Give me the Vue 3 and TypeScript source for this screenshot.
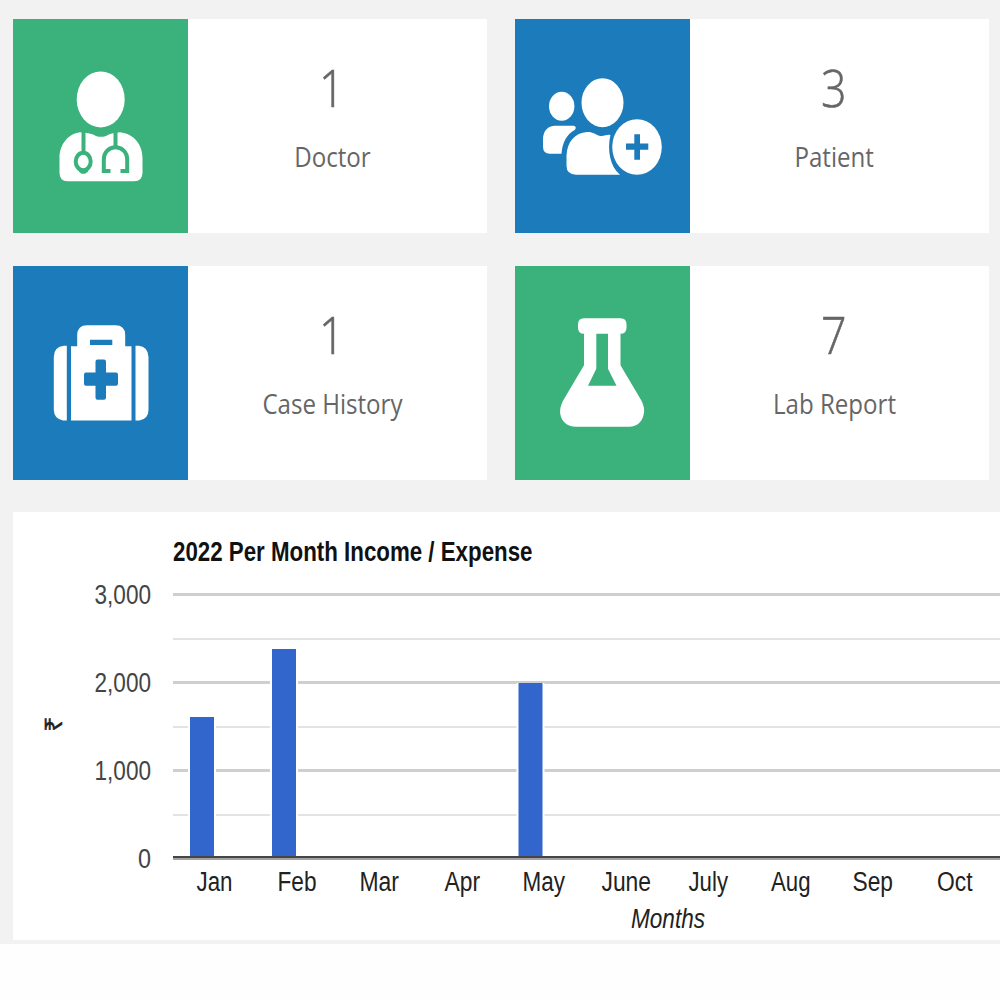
<script setup lang="ts">
interface StatCard {
  icon: 'doctor' | 'patient' | 'case' | 'lab'
  tone: 'green' | 'blue'
  viewBox: string
  value: number
  label: string
}

interface AxisLabel {
  text: string
  x: number
  width: number
}

interface Bar {
  month: string
  x: number
  y: number
}

const cards: StatCard[] = [
  { icon: 'doctor', tone: 'green', viewBox: '13 19.3 175 214', value: 1, label: 'Doctor' },
  { icon: 'patient', tone: 'blue', viewBox: '515 19.3 175 214', value: 3, label: 'Patient' },
  { icon: 'case', tone: 'blue', viewBox: '13 266.3 175 214', value: 1, label: 'Case History' },
  { icon: 'lab', tone: 'green', viewBox: '515 266.3 175 214', value: 7, label: 'Lab Report' },
]

const months: AxisLabel[] = [
  { text: 'Jan', x: 196.5, width: 36 },
  { text: 'Feb', x: 277.5, width: 39 },
  { text: 'Mar', x: 359.5, width: 39.5 },
  { text: 'Apr', x: 444.5, width: 35.5 },
  { text: 'May', x: 522.5, width: 42.5 },
  { text: 'June', x: 601.5, width: 49.5 },
  { text: 'July', x: 688.5, width: 39.5 },
  { text: 'Aug', x: 771, width: 39.5 },
  { text: 'Sep', x: 852.5, width: 40.5 },
  { text: 'Oct', x: 937, width: 35.5 },
]

const ticks = [
  { text: '3,000', y: 604, x: 94.5, width: 56.5 },
  { text: '2,000', y: 691.5, x: 94.5, width: 56.5 },
  { text: '1,000', y: 779.5, x: 94.5, width: 56.5 },
  { text: '0', y: 867.5, x: 138, width: 13 },
]

const majorLines = [593, 681, 769]
const minorLines = [638, 726, 814]

const bars: Bar[] = [
  { month: 'Jan', x: 190, y: 717 },
  { month: 'Feb', x: 272, y: 649 },
  { month: 'May', x: 518.5, y: 683 },
]
</script>

<template>
  <main class="page">
    <div class="dashboard">
      <section class="cards">
        <article v-for="card in cards" :key="card.label" class="card">
          <div class="tile" :class="card.tone">
            <svg :viewBox="card.viewBox" width="175" height="214" fill="#fff">
              <g v-if="card.icon === 'doctor'">
                <ellipse cx="100.7" cy="99.7" rx="24" ry="28" />
                <path d="M80 132.500 Q91 133 96 136.200 Q101 138 106 136.200 Q111 133 120 132.500 C134 134 142.500 145 142.500 158 V173 Q142.500 181.500 134 181.500 H67.500 Q59.500 181.500 59.500 173 V158 C59.500 145 68 134 80 132.500Z" />
                <g class="cutout">
                  <path d="M83.500 130 V153" />
                  <ellipse cx="83.200" cy="161.800" rx="7.500" ry="8.700" />
                  <path class="knob" d="M79 169 H88 V172 L85 174 H81.500 L79 172Z" />
                  <path d="M115.500 130 V147" />
                  <path d="M110.500 171.200 H103.800 V160 C103.800 143.500 127.200 143.500 127.200 160 V171.200 H120.500" />
                </g>
              </g>
              <g v-else-if="card.icon === 'patient'">
                <ellipse cx="561.700" cy="106.500" rx="12.700" ry="14.500" />
                <ellipse cx="602.500" cy="103" rx="21" ry="24.500" />
                <path d="M555 126 H573.500 Q577 126.500 575 130 C566 135 562.500 143 561.500 154 H550 Q543 154 543 147 V140 C543 131 548 126 555 126Z" />
                <path d="M587 132.200 C593 132 596 135 600 136.200 C604 137 607 134.500 610.500 135.300 C607 150 610 167 620 175 H576 Q566.500 174.500 566.500 166 V156 C567 142 575 133 587 132.200Z" />
                <ellipse cx="637" cy="147.300" rx="24.800" ry="27.800" />
                <path class="blue-mark" d="M634.300 134.500 H640 V143.700 H648.300 V150 H640 V160 H634.300 V150 H626 V143.700 H634.300Z" />
              </g>
              <g v-else-if="card.icon === 'case'">
                <path d="M64 346 H66.800 V420.800 H63 Q54 419 53.800 410 V357 Q54 347 64 346Z" />
                <path d="M138.500 346 H135.500 V420.800 H139.500 Q148.500 419 148.500 410 V357 Q148 347 138.500 346Z" />
                <path fill-rule="evenodd" d="M71 346.500 H77.200 V335 Q77.500 325.500 87 325.500 H115.500 Q125 325.500 125.200 335 V346.500 H131.500 V420.800 H71Z M90 340 V345.300 H112.300 V340Z" />
                <path class="blue-mark" d="M97.500 359.800 H104 Q106 359.800 106 362 V372.800 H116 Q118 372.800 118 375 V384 Q118 386 116 386 H106 V398 Q106 400 104 400 H97.500 Q95.500 400 95.500 398 V386 H86 Q84 386 84 384 V375 Q84 372.800 86 372.800 H95.500 V362 Q95.500 359.800 97.500 359.800Z" />
              </g>
              <g v-else>
                <path fill-rule="evenodd" d="M584 318.500 H620.500 Q626.500 318.500 626.500 324.500 V328 Q626.500 334 620.500 334 V365.500 L641.500 401 Q645 408 643.800 414 Q641.500 426.500 629 427 H576 Q562.500 426.500 560.200 414 Q559.500 408 563 401 L584 365.500 V334 Q578 334 578 328 V324.500 Q578 318.500 584 318.500Z M596.300 334 V369 L588 386 H616.500 L608 369 V334Z" />
              </g>
            </svg>
          </div>
          <div class="info">
            <strong class="value">{{ card.value }}</strong>
            <span class="label">{{ card.label }}</span>
          </div>
        </article>
      </section>

      <section class="panel">
        <svg class="chart" viewBox="13 512 987 428" width="987" height="428">
          <text class="title" x="173" y="561" textLength="359.500" lengthAdjust="spacingAndGlyphs">2022 Per Month Income / Expense</text>

          <rect v-for="y in majorLines" :key="'major' + y" class="major" x="173" :y="y" width="827" height="3" />
          <rect v-for="y in minorLines" :key="'minor' + y" class="minor" x="173" :y="y" width="827" height="2" />

          <g v-for="bar in bars" :key="bar.month">
            <rect class="halo" :x="bar.x - 2" :y="bar.y" width="28" :height="857 - bar.y" />
            <rect class="bar" :x="bar.x" :y="bar.y" width="24" :height="857 - bar.y" />
          </g>
          <rect class="axis" x="173" y="856" width="827" height="2" />
          <rect class="axis-shade" x="173" y="858" width="827" height="2" />

          <text v-for="tick in ticks" :key="tick.text" class="tick" :x="tick.x" :y="tick.y" :textLength="tick.width" lengthAdjust="spacingAndGlyphs">{{ tick.text }}</text>
          <text v-for="month in months" :key="month.text" class="month" :x="month.x" :y="891" :textLength="month.width" lengthAdjust="spacingAndGlyphs">{{ month.text }}</text>

          <text class="rupee" transform="translate(61.500 731.500) rotate(-90)" x="0" y="0" textLength="16" lengthAdjust="spacingAndGlyphs">₹</text>
          <text class="axis-title" x="631" y="927.500" textLength="74" lengthAdjust="spacingAndGlyphs">Months</text>
        </svg>
      </section>
    </div>
  </main>
</template>

<style>
body {
  margin: 0;
  background: #fefefe;
}
</style>

<style scoped>
.page {
  width: 1000px;
  height: 1000px;
  overflow: hidden;
  background: #fefefe;
}

.dashboard {
  box-sizing: border-box;
  height: 944px;
  padding: 19px 0 4px 13px;
  background: #f2f2f2;
}

.cards {
  display: grid;
  grid-template-columns: 474px 474px;
  gap: 33px 28px;
}

.card {
  display: flex;
  height: 214px;
  background: #fff;
}

.tile {
  flex: none;
  width: 175px;
  height: 214px;
}

.tile svg {
  display: block;
}

.green {
  background: #3bb27c;
  --tone: #3bb27c;
}

.blue {
  background: #1b7bbb;
  --tone: #1b7bbb;
}

.cutout {
  fill: none;
  stroke: var(--tone);
  stroke-width: 4;
}

.cutout .knob {
  fill: var(--tone);
  stroke: none;
}

.blue-mark {
  fill: var(--tone);
}

.info {
  display: flex;
  flex: 1;
  flex-direction: column;
  align-items: center;
  padding: 36px 11px 0 0;
  color: #666;
  font-family: "Open Sans", "Noto Sans", sans-serif;
}

.value {
  font-size: 52px;
  font-weight: 300;
  line-height: 64px;
  transform: scaleX(0.86);
  -webkit-text-stroke: 0.6px #666;
}

.label {
  margin-top: 18px;
  font-size: 28px;
  line-height: 38px;
  white-space: nowrap;
  transform: scaleX(0.86);
}

.panel {
  height: 428px;
  margin-top: 32px;
  background: #fff;
}

.chart {
  display: block;
  font-family: "Liberation Sans", Arial, sans-serif;
  font-size: 27px;
}

.title {
  fill: #111;
  font-weight: 700;
}

.tick {
  fill: #444;
}

.month,
.axis-title {
  fill: #222;
}

.axis-title {
  font-style: italic;
}

.rupee {
  fill: #222;
  stroke: #222;
  stroke-width: 0.4px;
  font-size: 24px;
}

.major {
  fill: #cfcfcf;
}

.minor {
  fill: #e3e3e3;
}

.halo {
  fill: #fff;
}

.bar {
  fill: #3366cc;
}

.axis {
  fill: #454545;
}

.axis-shade {
  fill: #a3a3a3;
}
</style>
